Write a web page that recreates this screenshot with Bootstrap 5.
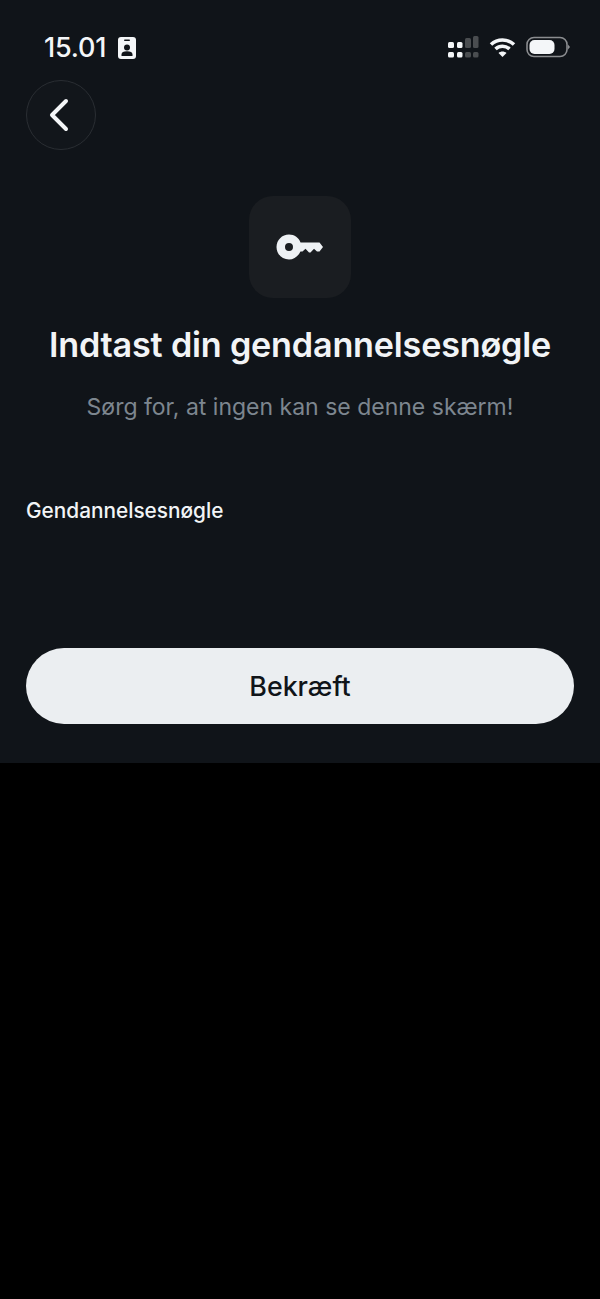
<!DOCTYPE html>
<html lang="da">
<head>
  <meta charset="UTF-8" />
  <title>Gendannelsesnøgle</title>
  <link href="https://cdn.jsdelivr.net/npm/bootstrap@5.3.3/dist/css/bootstrap.min.css" rel="stylesheet">
  <style>
    body { background: #000; font-family: Inter, "Liberation Sans", sans-serif; }
    .screen-panel { height: 763px; background: #101419; padding: 0 26px; }
    .status-row { height: 80px; padding: 30px 4px 0 18px; align-items: flex-start; }
    .status-time { font-size: 27px; line-height: 35px; font-weight: 500; color: #f4f6f8; letter-spacing: -0.2px; }
    .status-icons { padding-top: 5px; }
    .wifi-icon { margin: 0 10px 0 10px; }
    .back-btn { width: 70px; height: 70px; border: 1px solid #2a2e33; background: #12161b; }
    .back-btn:hover { background: #12161b; border-color: #2a2e33; }
    .key-tile { width: 102px; height: 102px; margin-top: 46px; border-radius: 24px; background: #1a1d21; }
    .page-title { margin: 26px 0 0; font-size: 34.2px; line-height: 42px; font-weight: 600; color: #f2f4f6; letter-spacing: -0.2px; }
    .page-sub { margin: 25px 0 0; font-size: 23px; line-height: 32px; color: #7d868f; }
    .field-label { margin: 74px 0 0; font-size: 20.800px; line-height: 28px; font-weight: 500; color: #f2f4f6; }
    .confirm-btn { height: 76px; margin-top: 123px; border-radius: 38px; background: #ebeef1; border: 0; color: #101419; font-size: 26.800px; font-weight: 500; }
    .confirm-btn:hover { background: #ebeef1; color: #101419; }
  </style>
</head>
<body>

<div class="screen-panel">
  <!-- Statuslinje -->
  <div class="status-row d-flex justify-content-between">
    <div class="d-flex align-items-center gap-2">
      <span class="status-time">15.01</span>
      <svg class="ms-1" width="18" height="24" viewBox="0 0 18 24">
        <rect x="0" y="1" width="18" height="22" rx="3" fill="#f4f6f8"/>
        <rect x="6" y="3.500" width="6" height="1.600" rx=".8" fill="#101419"/>
        <circle cx="9" cy="11.500" r="3" fill="#101419"/>
        <path d="M3.500 20v-1.500c0-2 2-3.200 5.500-3.200s5.500 1.200 5.500 3.200V20z" fill="#101419"/>
      </svg>
    </div>
    <div class="status-icons d-flex align-items-center">
      <svg width="32" height="24" viewBox="0 0 32 24">
        <rect x="1" y="7" width="6" height="6" rx="1.500" fill="#f4f6f8"/>
        <rect x="1" y="17" width="6" height="5.500" rx="1.500" fill="#f4f6f8"/>
        <rect x="10" y="7" width="5.500" height="6" rx="1.500" fill="#f4f6f8"/>
        <rect x="10" y="17" width="5.500" height="5.500" rx="1.500" fill="#f4f6f8"/>
        <rect x="18" y="3" width="6" height="10" rx="1.500" fill="#4a4d50"/>
        <rect x="18" y="17" width="6" height="5.500" rx="1.500" fill="#4a4d50"/>
        <rect x="26" y="1" width="5.500" height="12" rx="1.500" fill="#4a4d50"/>
        <rect x="26" y="17" width="5.500" height="5.500" rx="1.500" fill="#4a4d50"/>
      </svg>
      <svg class="wifi-icon" width="27" height="22" viewBox="0 0 27 22" fill="none" stroke="#f4f6f8" stroke-width="3.600">
        <path d="M2 8.500c6.500-6 16.500-6 23 0"/>
        <path d="M6.500 13c4-3.600 10-3.600 14 0"/>
        <path d="M13.500 21l-4-4c2.200-2 5.800-2 8 0z" fill="#f4f6f8" stroke="none"/>
      </svg>
      <svg width="44" height="22" viewBox="0 0 44 22">
        <rect x="1" y="1.500" width="40" height="19" rx="7" fill="none" stroke="#8b8d90" stroke-width="1.600"/>
        <rect x="3.500" y="4" width="25" height="14" rx="5" fill="#f4f6f8"/>
        <path d="M42 8.500l2 2.500-2 2.500z" fill="#8b8d90"/>
      </svg>
    </div>
  </div>

  <button type="button" class="btn back-btn rounded-circle d-flex align-items-center justify-content-center p-0">
    <svg class="me-1" width="24" height="36" viewBox="0 0 24 36" fill="none" stroke="#f4f6f8" stroke-width="4" stroke-linecap="round" stroke-linejoin="round">
      <path d="M19 4L5 18l14 14"/>
    </svg>
  </button>

  <div class="d-flex flex-column align-items-center text-center">
    <div class="key-tile d-flex align-items-center justify-content-center">
      <svg width="48" height="28" viewBox="0 0 48 28">
        <path fill-rule="evenodd" fill="#eef1f4" d="M13 1.500c5.500 0 10 3.300 11.500 8H43.500l3.500 4.500-3.500 4.500h-2.500l-3-2.800-3.500 3.800h-1.500l-3.500-3.800-3 2.800h-2C22 23.500 18 26.500 13 26.500 6 26.500.5 21 .5 14S6 1.500 13 1.500zM13 10a4 4 0 1 0 0 8 4 4 0 0 0 0-8z"/>
      </svg>
    </div>
    <h1 class="page-title">Indtast din gendannelsesnøgle</h1>
    <p class="page-sub">Sørg for, at ingen kan se denne skærm!</p>
  </div>

  <p class="field-label">Gendannelsesnøgle</p>

  <button type="button" class="btn confirm-btn w-100 d-block">Bekræft</button>
</div>

<script src="https://cdn.jsdelivr.net/npm/bootstrap@5.3.3/dist/js/bootstrap.bundle.min.js"></script>
</body>
</html>
